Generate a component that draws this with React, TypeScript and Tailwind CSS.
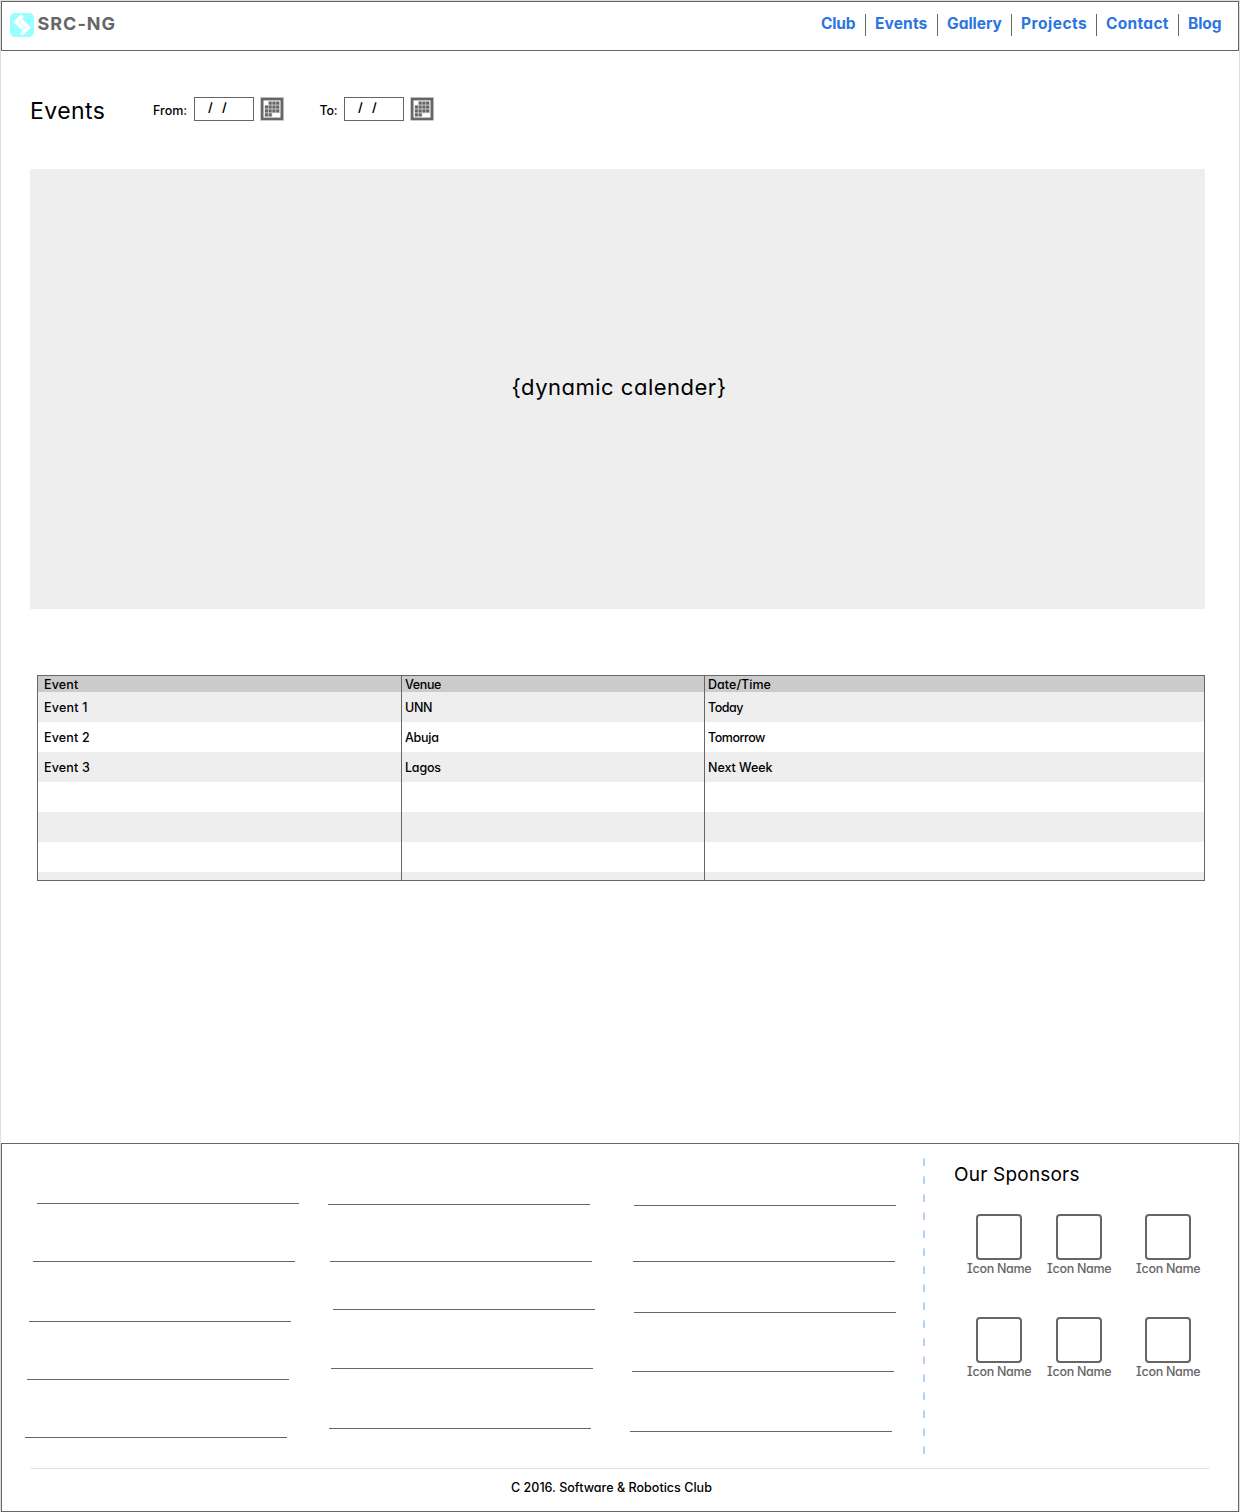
const NAV = [
  { label: "Club", cell: "w-[45px] pl-[1px] tracking-[-0.2px]" },
  { label: "Events", cell: "w-[72px] border-l pl-[9px] tracking-[0.15px]" },
  { label: "Gallery", cell: "w-[74px] border-l pl-[9px] tracking-[0px]" },
  { label: "Projects", cell: "w-[85px] border-l pl-[9px] tracking-[0.5px]" },
  { label: "Contact", cell: "w-[82px] border-l pl-[9px] tracking-[0.3px]" },
  { label: "Blog", cell: "w-[60px] border-l pl-[9px] tracking-[-0.1px]" },
];

type Cell = { text: string; spacing: string };

const ROWS: Cell[][] = [
  [
    { text: "Event 1", spacing: "tracking-[0.2px]" },
    { text: "UNN", spacing: "tracking-[-0.3px]" },
    { text: "Today", spacing: "tracking-[-0.48px]" },
  ],
  [
    { text: "Event 2", spacing: "tracking-[0.17px]" },
    { text: "Abuja", spacing: "tracking-[-0.25px]" },
    { text: "Tomorrow", spacing: "tracking-[-0.46px]" },
  ],
  [
    { text: "Event 3", spacing: "tracking-[0.17px]" },
    { text: "Lagos", spacing: "tracking-[-0.2px]" },
    { text: "Next Week", spacing: "tracking-[-0.05px]" },
  ],
];

const LINES = [
  [
    "ml-[12px] mt-[59px]",
    "ml-[8px] mt-[57px]",
    "ml-[4px] mt-[59px]",
    "ml-[2px] mt-[57px]",
    "ml-0 mt-[57px]",
  ],
  [
    "ml-[3px] mt-[60px]",
    "ml-[5px] mt-[56px]",
    "ml-[8px] mt-[47px]",
    "ml-[6px] mt-[58px]",
    "ml-[4px] mt-[59px]",
  ],
  [
    "ml-[9px] mt-[61px]",
    "ml-[8px] mt-[55px]",
    "ml-[9px] mt-[50px]",
    "ml-[7px] mt-[58px]",
    "ml-[5px] mt-[59px]",
  ],
];

function Logo() {
  return (
    <svg width="24" height="24" viewBox="0 0 24 24" className="mt-[11px] ml-[8px] shrink-0">
      <rect width="24" height="24" rx="5" fill="#99ffff" />
      <path d="M12.8 2.6 6 9 13.3 15.4" fill="none" stroke="#fff" strokeWidth="4" />
      <path d="M11 7.6 18.2 14.6 11.2 21.4" fill="none" stroke="#fff" strokeWidth="4" />
      <path d="M9.4 9.2 15 14.8" stroke="#c4ffff" strokeWidth="0.8" />
    </svg>
  );
}

const DAYS = [
  [1, 0], [2, 0], [3, 0],
  [0, 1], [1, 1], [2, 1], [3, 1],
  [0, 2], [1, 2], [2, 2], [3, 2],
  [0, 3], [1, 3],
];

function CalendarIcon() {
  return (
    <svg width="24" height="24" viewBox="0 0 24 24" className="ml-[6px] shrink-0">
      <rect x="0.4" y="0.2" width="23.4" height="23.4" fill="#aaaaaa" />
      <rect x="1" y="1" width="22" height="22" fill="#666666" />
      <rect x="3.5" y="3.4" width="17" height="17.2" fill="#ffffff" />
      {DAYS.map(([c, r]) => (
        <rect key={`${c}-${r}`} x={4.8 + c * 3.75} y={4.4 + r * 3.9} width="3.75" height="3.9" fill="#cccccc" />
      ))}
      {DAYS.map(([c, r]) => (
        <rect key={`${c}-${r}`} x={4.9 + c * 3.75} y={4.6 + r * 3.9} width="3" height="3" fill="#666666" />
      ))}
    </svg>
  );
}

function DateInput() {
  return (
    <div className="flex h-[24px] w-[60px] shrink-0 items-start border border-[#666666] bg-white pl-[13px]">
      <span className="w-[14px] text-[12.5px] leading-[20px] font-semibold">/</span>
      <span className="text-[12.5px] leading-[20px] font-semibold">/</span>
    </div>
  );
}

function Sponsor() {
  return (
    <div className="flex w-[80px] flex-col items-center">
      <div className="h-[46px] w-[46px] rounded-[4px] border-2 border-[#666666] bg-white" />
      <span className="mt-[1px] pl-[0.5px] text-[12.5px] leading-[16px] font-medium tracking-[-0.29px] whitespace-nowrap text-[#666666]">
        Icon Name
      </span>
    </div>
  );
}

function SponsorRow() {
  return (
    <div className="flex">
      <Sponsor />
      <Sponsor />
      <div className="ml-[9px]">
        <Sponsor />
      </div>
    </div>
  );
}

const BODY_ROWS = [0, 1, 2, 3, 4, 5];

export default function App() {
  return (
    <div className="flex h-[1512px] w-[1240px] flex-col border-x border-t border-[#dddddd] bg-white font-['Inter',sans-serif] text-black [font-feature-settings:'cv11','cv08']">
      <header className="flex h-[50px] shrink-0 items-start justify-between border border-[#666666]">
        <div className="flex">
          <Logo />
          <span className="mt-[11px] ml-[3.5px] text-[18px] leading-[22px] font-bold tracking-[1px] text-[#666666]">SRC-NG</span>
        </div>
        <nav className="mt-[12px] flex">
          {NAV.map((n) => (
            <a
              key={n.label}
              className={`h-[22px] border-[#666666] text-[15.5px] leading-[20px] font-bold whitespace-nowrap text-[#2b75e2] ${n.cell}`}
            >
              {n.label}
            </a>
          ))}
        </nav>
      </header>

      <main className="flex h-[1092px] shrink-0 flex-col">
        <div className="mt-[46px] ml-[29px] flex h-[24px] items-start">
          <h1 className="w-[123px] text-[23px] leading-[28px] tracking-[0.45px]">Events</h1>
          <span className="w-[41px] text-[12.5px] leading-[27px] font-medium tracking-[0px]">From:</span>
          <DateInput />
          <CalendarIcon />
          <span className="ml-[35px] w-[25px] pl-[0.5px] text-[12.5px] leading-[27px] font-medium tracking-[-0.3px]">To:</span>
          <DateInput />
          <CalendarIcon />
        </div>

        <section className="mt-[48px] ml-[29px] flex h-[440px] w-[1175px] shrink-0 items-center justify-center bg-[#eeeeee]">
          <p className="pb-[4px] pl-[3px] text-[22px] leading-[28px] tracking-[0.5px]">{"{dynamic calender}"}</p>
        </section>

        <section className="mt-[66px] ml-[36px] flex h-[206px] w-[1168px] shrink-0 flex-col overflow-hidden border border-[#666666] text-[12.5px] font-medium">
          <div className="grid h-[16px] shrink-0 grid-cols-[363px_303px_1fr] bg-[#cbcbcb] leading-[18px]">
            <div className="pl-[6px] tracking-[0.15px]">Event</div>
            <div className="border-l border-[#666666] pl-[3px] tracking-[-0.38px]">Venue</div>
            <div className="border-l border-[#666666] pl-[3px] tracking-[0.04px]">Date/Time</div>
          </div>
          {BODY_ROWS.map((i) => {
            const row = ROWS[i];
            return (
              <div
                key={i}
                className={`grid h-[30px] shrink-0 grid-cols-[363px_303px_1fr] leading-[32px] ${i % 2 === 0 ? "bg-[#eeeeee]" : "bg-white"}`}
              >
                <div className={`h-[30px] pl-[6px] ${row?.[0].spacing ?? ""}`}>{row?.[0].text}</div>
                <div className={`h-[30px] border-l border-[#666666] pl-[3px] ${row?.[1].spacing ?? ""}`}>{row?.[1].text}</div>
                <div className={`h-[30px] border-l border-[#666666] pl-[3px] ${row?.[2].spacing ?? ""}`}>{row?.[2].text}</div>
              </div>
            );
          })}
          <div className="grid h-[8px] shrink-0 grid-cols-[363px_303px_1fr] bg-[#eeeeee]">
            <div />
            <div className="border-l border-[#666666]" />
            <div className="border-l border-[#666666]" />
          </div>
        </section>
      </main>

      <footer className="flex h-[369px] shrink-0 flex-col border border-[#666666]">
        <div className="flex h-[324px] shrink-0">
          <div className="grid w-[921px] shrink-0 grid-cols-[300px_300px_298px] pl-[23px]">
            {LINES.map((col, c) => (
              <div key={c}>
                {col.map((pos, i) => (
                  <div key={i} className={`h-px w-[262px] bg-[#666666] ${pos}`} />
                ))}
              </div>
            ))}
          </div>
          <div className="mt-[14px] h-[296px] w-[2px] shrink-0 bg-[repeating-linear-gradient(to_bottom,#cfe3f5_0px,#cfe3f5_1px,#b4d3f0_1px,#b4d3f0_8px,transparent_8px,transparent_18px)]" />
          <div className="pl-[34px]">
            <h2 className="mt-[17px] -ml-[5px] text-[19px] leading-[28px] tracking-[0.2px]">Our Sponsors</h2>
            <div className="mt-[25px] flex flex-col gap-[40px]">
              <SponsorRow />
              <SponsorRow />
            </div>
          </div>
        </div>
        <div className="ml-[29px] h-px w-[1178px] shrink-0 bg-[#dddddd]" />
        <p className="mt-[9px] pl-[509px] text-[12.5px] leading-[19px] font-medium tracking-[0.03px]">C 2016. Software &amp; Robotics Club</p>
      </footer>
    </div>
  );
}
